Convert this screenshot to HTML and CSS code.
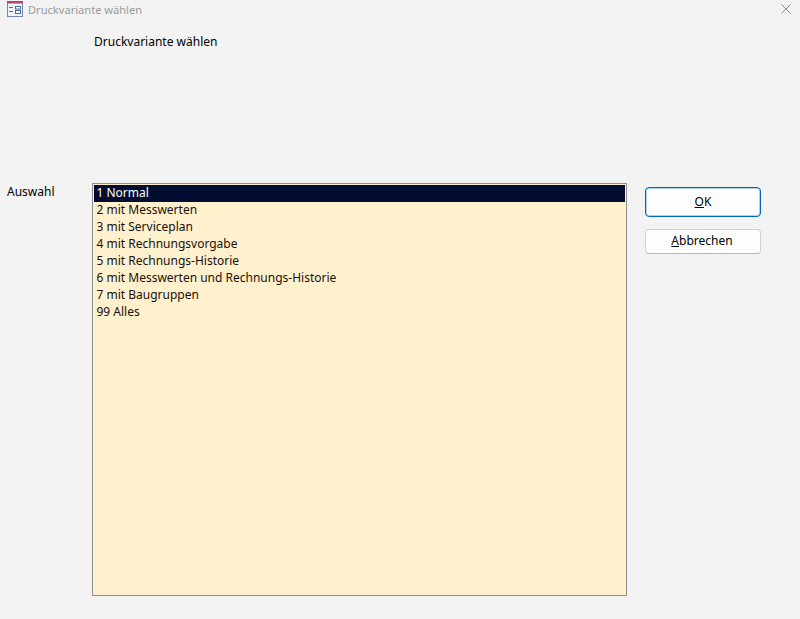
FILE: index.html
```html
<!DOCTYPE html>
<html lang="de">
<head>
<meta charset="utf-8">
<title>Druckvariante wählen</title>
<link rel="stylesheet" href="styles.css">
</head>
<body>
<div class="window">
  <header class="titlebar">
    <svg class="app-icon" width="16" height="16" viewBox="0 0 16 16" aria-hidden="true">
      <rect x="0.5" y="0.5" width="15" height="15" fill="#eef2fa" stroke="#7489b2"/>
      <rect x="0" y="0" width="16" height="2.5" fill="#b5466e"/>
      <path d="M2 6.5h4M2 10.5h4" stroke="#4f71a6" fill="none"/>
      <rect x="8.5" y="5.5" width="5" height="2.5" fill="#fff" stroke="#4a6ca3"/>
      <rect x="8.5" y="9.5" width="5" height="3" fill="#fff" stroke="#4a6ca3"/>
    </svg>
    <span class="title-text">Druckvariante wählen</span>
    <svg class="close-icon" width="10" height="10" viewBox="0 0 10 10" aria-hidden="true">
      <path d="M0.5 0.5l9 9M9.5 0.5l-9 9" stroke="#8a8a8a" fill="none"/>
    </svg>
  </header>
  <main class="form">
    <h1 class="heading">Druckvariante wählen</h1>
    <div class="body-row">
      <label class="field-label">Auswahl</label>
      <ul class="listbox">
        <li class="selected">1 Normal</li>
        <li>2 mit Messwerten</li>
        <li>3 mit Serviceplan</li>
        <li>4 mit Rechnungsvorgabe</li>
        <li>5 mit Rechnungs-Historie</li>
        <li>6 mit Messwerten und Rechnungs-Historie</li>
        <li>7 mit Baugruppen</li>
        <li>99 Alles</li>
      </ul>
      <div class="actions">
        <button class="btn btn-default" type="button"><span class="btn-label"><u>O</u>K</span></button>
        <button class="btn btn-cancel" type="button"><span class="btn-label"><u>A</u>bbrechen</span></button>
      </div>
    </div>
  </main>
</div>
</body>
</html>
```

FILE: styles.css
```css
html, body {
  margin: 0;
  padding: 0;
  height: 100%;
  background: #f3f3f3;
}
.window {
  width: 800px;
  height: 619px;
  overflow: hidden;
  font-family: "Noto Sans", "Open Sans", sans-serif;
  font-size: 12px;
  color: #000;
}
.titlebar {
  display: flex;
  align-items: center;
  height: 18px;
  padding: 0 9px 0 7px;
}
.app-icon { flex: none; }
.title-text {
  margin-left: 5px;
  font-size: 11.1px;
  color: #9a9a9a;
  flex: 1;
}
.close-icon { flex: none; }
.form {
  padding-left: 7px;
}
.heading {
  margin: 15px 0 0 87px;
  height: 17px;
  line-height: 17px;
  font-size: 12px;
  font-weight: 400;
}
.body-row {
  display: flex;
  align-items: flex-start;
  margin-top: 133px;
}
.field-label {
  width: 85px;
  flex: none;
  line-height: 17px;
}
.listbox {
  list-style: none;
  margin: 0;
  padding: 1px;
  box-sizing: border-box;
  width: 535px;
  height: 413px;
  flex: none;
  background: #fff1ce;
  border: 1px solid #8f8f8f;
  color: #1a0f0a;
}
.listbox li {
  height: 17px;
  line-height: 15px;
  padding-left: 2.5px;
}
.listbox li.selected {
  background: #020c30;
  color: #fff;
}
.actions {
  display: flex;
  flex-direction: column;
  margin-left: 18px;
  margin-top: 4px;
  gap: 12px;
}
.btn {
  width: 116px;
  background: #fdfdfd;
  font: inherit;
  color: #000;
  border-radius: 4px;
  box-sizing: border-box;
}
.btn-label {
  display: block;
  line-height: 16px;
}
.btn-default {
  height: 30px;
  padding: 0 0 0 0;
  border: 1px solid #0067c0;
  box-shadow: inset 0 0 0 1px rgba(0, 103, 192, 0.3);
}
.btn-cancel {
  height: 25px;
  padding: 0 2px 2px 0;
  border: 1px solid #d0d0d0;
  border-bottom-color: #b8b8b8;
}
```
